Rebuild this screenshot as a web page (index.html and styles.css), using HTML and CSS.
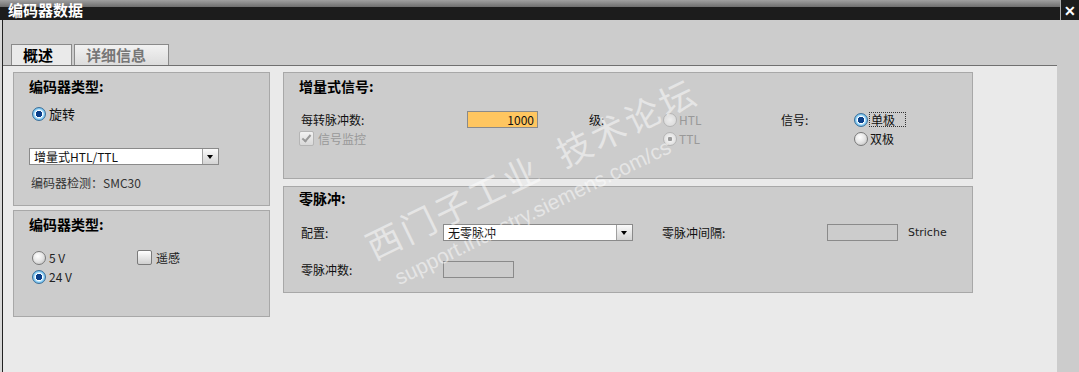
FILE: index.html
```html
<!DOCTYPE html>
<html>

<head>
    <title>编码器数据</title>
    <link rel="stylesheet" href="styles.css">
</head>

<body>
    <div class="titlebar">
        <span class="title">编码器数据</span>
        <span class="close">✕</span>
    </div>

    <div class="window">
        <div class="edge"></div>
        <div class="main">
            <div class="tabs">
                <div class="tab active">概述</div>
                <div class="tab">详细信息</div>
            </div>

            <div class="body-row">
                <div class="content">
                    <div class="col-left">
                        <section class="panel p-type">
                            <h2>编码器类型:</h2>
                            <div class="opt"><span class="radio on"></span>旋转</div>
                            <div class="select w190"><span class="val">增量式HTL/TTL</span><span class="drop"></span></div>
                            <div class="note">编码器检测：SMC30</div>
                        </section>

                        <section class="panel p-volt">
                            <h2>编码器类型:</h2>
                            <div class="volt-grid">
                                <div class="opt"><span class="radio"></span>5 V</div>
                                <div class="opt"><span class="check"></span>遥感</div>
                                <div class="opt"><span class="radio on"></span>24 V</div>
                            </div>
                        </section>
                    </div>

                    <div class="col-right">
                        <section class="panel p-sig">
                            <h2>增量式信号:</h2>
                            <div class="sig-grid">
                                <div class="lbl">每转脉冲数:</div>
                                <div class="num">1000</div>
                                <div class="lbl">级:</div>
                                <div class="stack">
                                    <div class="opt dis"><span class="radio"></span>HTL</div>
                                    <div class="opt dis"><span class="radio on"></span>TTL</div>
                                </div>
                                <div class="lbl">信号:</div>
                                <div class="stack">
                                    <div class="opt"><span class="radio on"></span><span class="focus">单极</span></div>
                                    <div class="opt"><span class="radio"></span>双极</div>
                                </div>
                                <div class="opt dis span2"><span class="check checked"></span>信号监控</div>
                            </div>
                        </section>

                        <section class="panel p-zero">
                            <h2>零脉冲:</h2>
                            <div class="zero-row">
                                <div class="lbl w142">配置:</div>
                                <div class="select w190"><span class="val">无零脉冲</span><span class="drop"></span></div>
                                <div class="lbl w165">零脉冲间隔:</div>
                                <div class="box"></div>
                                <div class="unit">Striche</div>
                            </div>
                            <div class="zero-row">
                                <div class="lbl w142">零脉冲数:</div>
                                <div class="box"></div>
                            </div>
                        </section>
                    </div>
                </div>
                <div class="side"></div>
            </div>
        </div>
    </div>

    <div class="watermark">
        <div class="wm-big">西门子工业&nbsp;&nbsp;技术论坛</div>
        <div class="wm-small">support.industry.siemens.com/cs</div>
    </div>
</body>

</html>
```

FILE: styles.css
```css
body {
    margin: 0;
    width: 1079px;
    height: 372px;
    overflow: hidden;
    background-color: #cccccc;
    font-family: "Noto Sans CJK SC", "Liberation Sans", sans-serif;
    font-size: 12px;
    color: #111;
    position: relative;
}

.titlebar {
    height: 20px;
    display: flex;
    justify-content: space-between;
    align-items: center;
    background: linear-gradient(#a0a0a0 0, #6e6e6e 7px, #1c1c1c 7px, #1c1c1c 100%);
}

.title {
    color: #fff;
    font-weight: bold;
    font-size: 15px;
    padding-left: 8px;
    line-height: 20px;
}

.close {
    width: 18px;
    height: 20px;
    border-left: 1px solid #aaa;
    background-color: #1c1c1c;
    color: #fff;
    font-size: 14px;
    font-weight: bold;
    text-align: center;
    line-height: 20px;
}

.window {
    display: flex;
    height: 352px;
}

.edge {
    width: 2px;
    border-right: 1px solid #222;
    background-color: #d8d8d8;
}

.main {
    flex: 1;
    display: flex;
    flex-direction: column;
}

.tabs {
    height: 45px;
    display: flex;
    align-items: flex-end;
    padding-left: 8px;
    gap: 2px;
}

.tab {
    height: 20px;
    padding: 0 11px;
    font-size: 15px;
    font-weight: bold;
    line-height: 20px;
    color: #777;
    border: 1px solid #8a8a8a;
    border-bottom: none;
    background: linear-gradient(#f2f2f2, #dcdcdc);
}

.tab.active {
    height: 21px;
    width: 37px;
    padding: 0 11px;
    color: #000;
    background: #eaeaea;
    margin-bottom: -1px;
}

.tab:not(.active) {
    width: 71px;
}

.body-row {
    flex: 1;
    display: flex;
}

.content {
    width: 1054px;
    background-color: #eaeaea;
    border-top: 1px solid #707070;
    display: flex;
    gap: 13px;
    padding: 6px 0 0 10px;
    box-sizing: border-box;
}

.side {
    flex: 1;
}

.col-left {
    width: 257px;
    display: flex;
    flex-direction: column;
    gap: 4px;
}

.col-right {
    width: 690px;
    display: flex;
    flex-direction: column;
    gap: 7px;
}

.panel {
    background-color: #cccccc;
    border: 1px solid #a8a8a8;
    box-sizing: border-box;
    padding: 5px 0 0 15px;
}

h2 {
    margin: 0;
    font-size: 14px;
    font-weight: bold;
    height: 16px;
    line-height: 16px;
    color: #000;
}

.opt {
    display: flex;
    align-items: center;
    height: 19px;
    gap: 3px;
}

.radio {
    width: 12px;
    height: 12px;
    border-radius: 50%;
    border: 1px solid #7a7a7a;
    background: radial-gradient(circle at 40% 35%, #ffffff 0, #e4e4e4 50%, #b8b8b8 100%);
    flex: none;
}

.radio.on {
    border-color: #3a6f9a;
    background: radial-gradient(circle, #0a3f8a 0, #0a3f8a 3px, #ffffff 3.5px, #8fd0f5 5px, #2f90d0 100%);
}

.check {
    width: 13px;
    height: 13px;
    border: 1px solid #7a7a7a;
    border-radius: 2px;
    background: linear-gradient(#ffffff, #cfcfcf);
    flex: none;
    margin-right: 1px;
}

.check.checked {
    position: relative;
}

.check.checked::after {
    content: "";
    position: absolute;
    left: 4px;
    top: 1px;
    width: 3px;
    height: 7px;
    border: solid #999;
    border-width: 0 2px 2px 0;
    transform: rotate(40deg);
}

.dis {
    color: #999;
}

.dis .radio {
    border-color: #b5b5b5;
    background: radial-gradient(circle, #ededed, #d6d6d6);
}

.dis .check {
    border-color: #b5b5b5;
    background: linear-gradient(#f2f2f2, #d8d8d8);
}

.dis .radio.on {
    background: radial-gradient(circle, #9a9a9a 0, #9a9a9a 2px, #efefef 2.5px, #d6d6d6 100%);
}

/* left top panel */
.p-type {
    height: 134px;
}

.p-type .opt {
    margin-top: 10px;
    padding-left: 3px;
    font-size: 13px;
}

.select {
    height: 17px;
    display: flex;
    border: 1px solid #8a8a8a;
    background-color: #fff;
    box-sizing: border-box;
}

.w190 {
    width: 190px;
}

.select .val {
    flex: 1;
    padding-left: 4px;
    font-size: 12px;
    line-height: 15px;
}

.drop {
    width: 15px;
    border-left: 1px solid #a0a0a0;
    background: linear-gradient(#fafafa, #d4d4d4);
    position: relative;
}

.drop::after {
    content: "";
    position: absolute;
    left: 4px;
    top: 6px;
    border-left: 3px solid transparent;
    border-right: 3px solid transparent;
    border-top: 4px solid #000;
}

.p-type .select {
    margin-top: 25px;
}

.note {
    margin-top: 9px;
    padding-left: 2px;
    color: #333;
    font-size: 12px;
}

/* left bottom panel */
.p-volt {
    height: 107px;
    padding-top: 5px;
}

.volt-grid {
    margin-top: 16px;
    padding-left: 3px;
    display: grid;
    grid-template-columns: 105px auto;
}

.volt-grid .opt {
    color: #222;
}

/* signal panel */
.p-sig {
    height: 107px;
}

.sig-grid {
    margin-top: 16px;
    padding-left: 2px;
    display: grid;
    grid-template-columns: 166px 122px 74px 118px 73px auto;
    grid-template-rows: 19px 19px;
    align-items: center;
}

.lbl {
    font-size: 12px;
    color: #111;
}

.num {
    width: 71px;
    height: 17px;
    box-sizing: border-box;
    border: 1px solid #8a8a8a;
    background-color: #ffc660;
    text-align: right;
    padding-right: 3px;
    line-height: 15px;
    font-size: 12px;
}

.stack {
    grid-row: span 2;
    align-self: start;
}

.stack .opt {
    gap: 2px;
}

.focus {
    outline: 1px dotted #333;
    padding: 0 10px 0 1px;
    line-height: 13px;
}

.span2 {
    grid-column: 1 / 3;
    grid-row: 2;
    margin-left: -2px;
}

/* zero pulse panel */
.p-zero {
    height: 107px;
    padding-top: 3px;
}

.zero-row {
    display: flex;
    align-items: center;
    height: 19px;
    padding-left: 2px;
}

.p-zero h2 + .zero-row {
    margin-top: 17px;
}

.zero-row + .zero-row {
    margin-top: 18px;
}

.w142 {
    width: 142px;
}

.w165 {
    width: 165px;
    padding-left: 29px;
}

.box {
    width: 71px;
    height: 17px;
    box-sizing: border-box;
    border: 1px solid #8a8a8a;
    background-color: #cccccc;
}

.unit {
    margin-left: 10px;
    font-family: "DejaVu Sans", sans-serif;
    font-size: 11px;
    color: #222;
}

.watermark {
    position: absolute;
    left: 356px;
    top: 224px;
    transform: rotate(-26deg);
    transform-origin: left top;
    color: rgba(255, 255, 255, 0.5);
    pointer-events: none;
}

.wm-big {
    font-size: 35px;
    letter-spacing: 3px;
    white-space: nowrap;
}

.wm-small {
    font-family: "Liberation Sans", sans-serif;
    font-size: 21px;
    margin-left: 12px;
    margin-top: 4px;
    white-space: nowrap;
}
```
